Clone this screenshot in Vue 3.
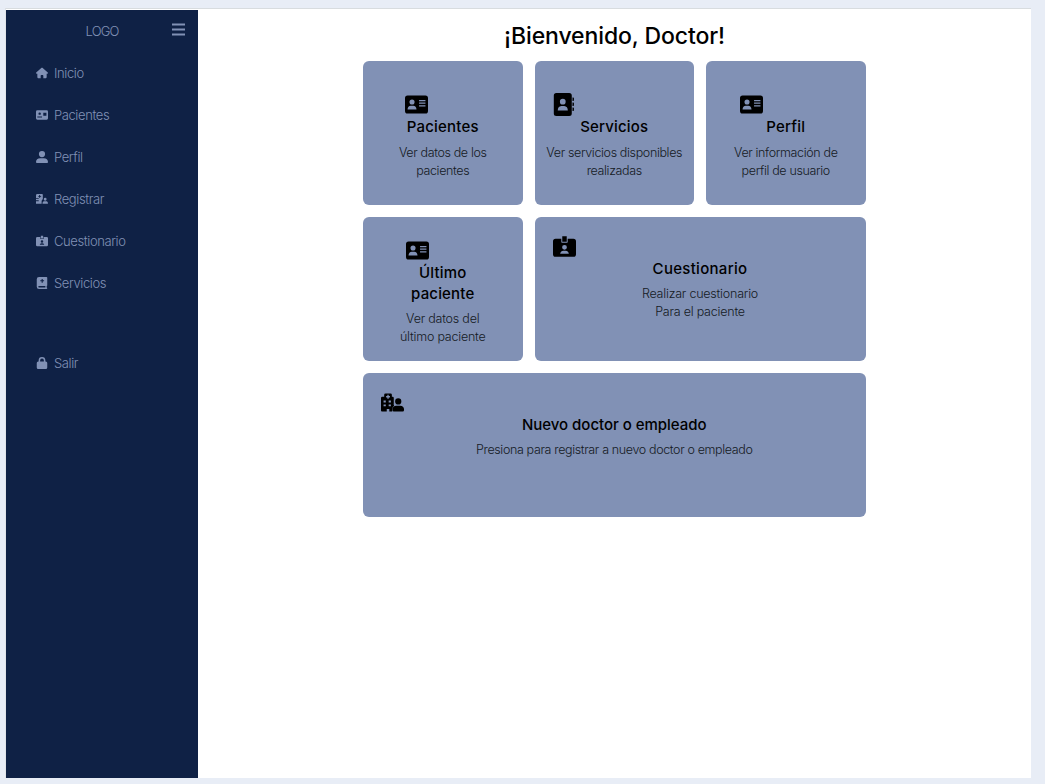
<script setup>
import { h } from 'vue'

const shapes = {
  home: ['0 0 576 512', 'M575.800 255.500c0 18-15 32.100-32 32.100h-32l.7 160.200c0 36-28 64-64 64H352v-128c0-18-14-32-32-32h-64c-18 0-32 14-32 32v128H128c-36 0-64-28-64-64V287.600H32c-18 0-32-14-32-32.100 0-9 3-17 10-24L266.400 8c7-7 15-8 22-8s15 2 21 7l255.400 224.500c8 7 12 15 11 24z'],
  card: ['0 0 576 512', 'M64 32h448q64 0 64 64v320q0 64-64 64H64q-64 0-64-64V96q0-64 64-64zM176 256a64 64 0 1 0 0-128 64 64 0 0 0 0 128zM64 384h224c0-58-35-96-80-96h-64c-45 0-80 38-80 96zM352 144v32h160v-32zm0 64v32h160v-32zm0 64v32h160v-32z'],
  cardAlt: ['0 0 576 512', 'M64 32h448q64 0 64 64v320q0 64-64 64H64q-64 0-64-64V96q0-64 64-64zM176 248a58 58 0 1 0 0-116 58 58 0 0 0 0 116zM64 376h224v-50H64zM350 150v140h150V150z'],
  user: ['0 0 512 512', 'M256 264a132 132 0 1 0 0-264 132 132 0 1 0 0 264zM180 310C70 310 0 380 0 470q0 42 36 42h440q36 0 36-42c0-90-70-160-180-160z'],
  register: ['0 0 576 512', 'M64 16h224q40 0 40 40v200l-58 80v145H0V360h130v-42H0v-60h130v-38H0V80q0-64 64-64zM150 60v48h-42v45h42v48h48v-48h48v-45h-48V60zM440 336a68 68 0 1 0 0-136 68 68 0 0 0 0 136zm-65 32h136q65 22 65 112H310q0-90 65-112z'],
  badge: ['0 0 576 512', 'M64 64h144v80q0 16 16 16h128q16 0 16-16V64h144q64 0 64 64v320q0 64-64 64H64q-64 0-64-64V128q0-64 64-64zM288 336a60 60 0 1 0 0-120 60 60 0 0 0 0 120zM180 440h216q-4-72-80-80h-56q-76 8-80 80zM232 0h112v136H232z'],
  bookMed: ['0 0 448 512', 'M96 0h320q32 0 32 32v320q0 24-24 32v64q24 2 24 32t-32 32H96Q0 512 0 416V96Q0 0 96 0zm0 384q-32 0-32 32t32 32h272v-64zM208 80v56h-56v48h56v56h48v-56h56v-48h-56V80z'],
  lock: ['0 0 448 512', 'M80 192v-48a144 144 0 0 1 288 0v48h16q64 0 64 64v192q0 64-64 64H64q-64 0-64-64V256q0-64 64-64zm64 0h160v-48a80 80 0 0 0-160 0z'],
  address: ['-40 0 512 512', 'M56 0h288q56 0 56 56v400q0 56-56 56H56q-56 0-56-56V56Q0 0 56 0zM200 256a64 64 0 1 0 0-128 64 64 0 0 0 0 128zM88 388h224q0-90-80-100h-64q-80 10-80 100zM416 100h16q16 0 16 16v44q0 16-16 16h-16zm0 112h16q16 0 16 16v44q0 16-16 16h-16zm0 112h16q16 0 16 16v44q0 16-16 16h-16z'],
  hospital: ['0 0 576 512', 'M80 64q0-32 32-32h128q32 0 32 32v48h16q32 0 32 32v130q-10 30 10 62-42 24-50 84v60H208v-64h-64v64H24q-24 0-24-24V144q0-32 32-32h48zm80 0v32h-32v32h32v32h32v-32h32V96h-32V64zM64 208v48h56v-48zm128 0v48h56v-48zM64 304v48h56v-48zm128 0v48h56v-48zM432 308a78 78 0 1 0 0-156 78 78 0 0 0 0 156zm-52 32h104c52 0 92 36 92 80v28q0 32-32 32H320q-32 0-32-32v-28c0-44 40-80 92-80z'],
}

const Icon = (props) => {
  const [viewBox, d] = shapes[props.name]
  return h('svg', { viewBox, 'aria-hidden': 'true' }, [h('path', { d, fill: 'currentColor', 'fill-rule': 'evenodd' })])
}
Icon.props = ['name']

const links = [
  ['home', 'Inicio'],
  ['cardAlt', 'Pacientes'],
  ['user', 'Perfil'],
  ['register', 'Registrar'],
  ['badge', 'Cuestionario'],
  ['bookMed', 'Servicios'],
  ['lock', 'Salir'],
]

const cards = [
  { icon: 'card', kind: 'small', title: ['Pacientes'], text: ['Ver datos de los', 'pacientes'] },
  { icon: 'address', kind: 'small', title: ['Servicios'], text: ['Ver servicios disponibles', 'realizadas'] },
  { icon: 'card', kind: 'small', title: ['Perfil'], text: ['Ver información de', 'perfil de usuario'] },
  { icon: 'card', kind: 'tall loose', title: ['Último', 'paciente'], text: ['Ver datos del', 'último paciente'] },
  { icon: 'badge', kind: 'medium loose', title: ['Cuestionario'], text: ['Realizar cuestionario', 'Para el paciente'] },
  { icon: 'hospital', kind: 'large', title: ['Nuevo doctor o empleado'], text: ['Presiona para registrar a nuevo doctor o empleado'] },
]
</script>

<template>
  <div class="page">
    <div class="window">
      <aside class="sidebar">
        <div class="brand">
          <span>LOGO</span>
          <svg class="menu" viewBox="0 0 13 13"><path d="M0 1.500h13M0 6.500h13M0 11.500h13" stroke="currentColor" stroke-width="2" /></svg>
        </div>
        <nav>
          <a v-for="[icon, label] in links" :key="label" :class="{ exit: icon === 'lock' }">
            <Icon :name="icon" class="nav-icon" /><span>{{ label }}</span>
          </a>
        </nav>
      </aside>
      <main>
        <h1>¡Bienvenido, Doctor!</h1>
        <section class="grid">
          <article v-for="card in cards" :key="card.title[0]" :class="['card', card.kind]">
            <div class="content">
              <Icon :name="card.icon" class="card-icon" />
              <h2><span v-for="line in card.title" :key="line">{{ line }}</span></h2>
              <p><span v-for="line in card.text" :key="line">{{ line }}</span></p>
            </div>
          </article>
        </section>
      </main>
    </div>
  </div>
</template>

<style>
body { margin: 0; overflow: hidden; }
</style>

<style scoped>
.page {
  box-sizing: border-box;
  width: 1045px;
  height: 784px;
  padding: 8px 14px 6px 5px;
  background: #e8edf6;
  font-family: Inter, "Liberation Sans", sans-serif;
}
.window {
  box-sizing: border-box;
  display: flex;
  height: 770px;
  border-top: 1px solid #d8dcdf;
  border-left: 1px solid #e0e4e8;
  padding-top: 1px;
  background: #fff;
}
.sidebar { width: 192px; background: #0f2145; color: #8191b5; font-size: 13px; font-weight: 300; }
.brand { display: flex; height: 42px; align-items: center; justify-content: center; position: relative; letter-spacing: -.9px; }
.menu { position: absolute; right: 13px; top: 13px; width: 13px; height: 13px; }
nav { padding-left: 30px; }
nav a { display: flex; height: 42px; align-items: center; gap: 6px; letter-spacing: -.4px; }
nav a.exit { margin-top: 38px; }
.nav-icon { width: 12px; height: 12px; flex: none; }
main { flex: 1; padding-top: 9px; }
h1 { margin: 0; font-size: 23px; line-height: 34px; font-weight: 500; text-align: center; color: #000; letter-spacing: -.1px; }
.grid { display: grid; grid-template-columns: repeat(3, minmax(0, 1fr)); grid-auto-rows: 144px; gap: 12px; width: 502.5px; margin: 8px 0 0 165px; }
.card { box-sizing: border-box; display: flex; justify-content: center; align-items: center; border-radius: 6px; padding: 12px; background: #8191b5; }
.medium { grid-column: span 2; }
.large { grid-column: span 3; }
.medium, .large { align-items: flex-start; }
.medium .content, .large .content { width: 100%; }
.content { display: flex; flex-direction: column; align-items: center; white-space: nowrap; }
.tall .content { padding-top: 1px; }
.card-icon { display: block; width: 23px; height: 23px; margin: 6px 0 0 6px; align-self: flex-start; color: #000; }
h2 { margin: 0; font-size: 15px; line-height: 21px; font-weight: 500; text-align: center; color: #000; letter-spacing: .18px; }
.medium h2 { letter-spacing: .3px; }
.large h2 { letter-spacing: -.03px; }
p { margin: 6px 0 0; font-size: 12.5px; line-height: 18px; font-weight: 300; text-align: center; color: #151a24; letter-spacing: -.36px; }
.small p { margin-top: 7px; }
.loose p { letter-spacing: -.22px; }
h2 span, p span { display: block; }
</style>
